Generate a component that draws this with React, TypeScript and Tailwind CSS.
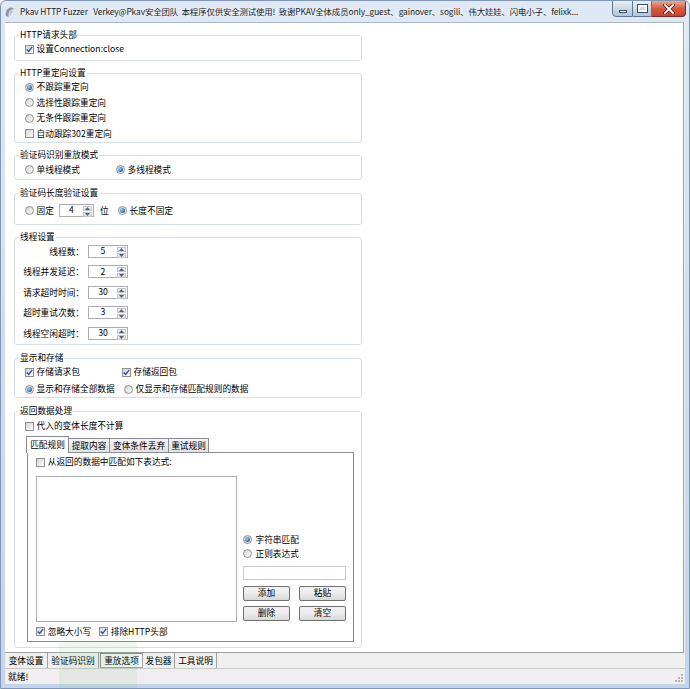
import React from 'react';

type ItemProps = { checked?: boolean; label: React.ReactNode; className?: string };

const CheckBox = ({ checked = false, label, className = '' }: ItemProps) => (
  <div className={`flex items-center gap-[3px] ${className}`}>
    <span className="w-[9px] h-[9px] shrink-0 border border-[#8e8f8f] bg-linear-to-br from-[#d4d4d4] to-[#fdfdfd] flex items-center justify-center">
      {checked && (
        <svg width="7" height="7" viewBox="0 0 7 7">
          <path d="M0.8 3.5 L2.7 5.4 L6.2 0.9" fill="none" stroke="#3a55a4" strokeWidth="1.5" />
        </svg>
      )}
    </span>
    <span className="whitespace-nowrap">{label}</span>
  </div>
);

const Radio = ({ checked = false, label, className = '' }: ItemProps) => (
  <div className={`flex items-center gap-[3px] ${className}`}>
    <span className="w-[9px] h-[9px] shrink-0 rounded-full border border-[#8e8f8f] bg-linear-to-br from-[#d2d2d2] to-[#fdfdfd] flex items-center justify-center">
      {checked && <span className="w-[5px] h-[5px] rounded-full bg-[radial-gradient(circle_at_35%_35%,#9ad6ff,#1b5bb0_75%)]" />}
    </span>
    <span className="whitespace-nowrap">{label}</span>
  </div>
);

const Spin = ({ value, className = '' }: { value: string; className?: string }) => (
  <div className={`flex h-[13px] border border-[#abadb3] bg-white ${className}`}>
    <div className="flex-1 flex items-center justify-center leading-none">{value}</div>
    <div className="w-[10px] flex flex-col gap-px py-px pr-px">
      <div className="flex-1 flex items-center justify-center bg-linear-to-b from-[#f6f6f6] to-[#dcdcdc] border border-[#c6c6c6]">
        <svg width="5" height="3" viewBox="0 0 5 3"><path d="M0 3 L2.5 0 L5 3Z" fill="#4a5f8a" /></svg>
      </div>
      <div className="flex-1 flex items-center justify-center bg-linear-to-b from-[#f6f6f6] to-[#dcdcdc] border border-[#c6c6c6]">
        <svg width="5" height="3" viewBox="0 0 5 3"><path d="M0 0 L2.5 3 L5 0Z" fill="#4a5f8a" /></svg>
      </div>
    </div>
  </div>
);

const Group = ({ title, className = '', children }: { title: string; className?: string; children?: React.ReactNode }) => (
  <div className={`relative w-[348px] shrink-0 border border-[#d5dfe5] rounded-[3px] ${className}`}>
    <span className="absolute left-[4px] -top-[7px] px-[1px] bg-white leading-[12px] whitespace-nowrap">{title}</span>
    {children}
  </div>
);

const WinButton = ({ label }: { label: string }) => (
  <button className="flex-1 h-full border border-[#707070] rounded-[2px] bg-linear-to-b from-[#f3f3f3] via-[#ebebeb] to-[#d8d8d8] flex items-center justify-center leading-none">
    {label}
  </button>
);

const threadRows = [
  { label: '线程数：', value: '5' },
  { label: '线程并发延迟：', value: '2' },
  { label: '请求超时时间：', value: '30' },
  { label: '超时重试次数：', value: '3' },
  { label: '线程空闲超时：', value: '30' },
];

export default function App() {
  return (
    <div className="relative w-[690px] h-[689px] flex flex-col overflow-hidden rounded-t-[6px] border border-[#7f96b6] bg-linear-to-b from-[#dfe9f5] via-[#cfdeef] to-[#c2d5eb] font-['Noto_Sans_CJK_SC','Noto_Sans',sans-serif] text-[8.7px] text-black">
      {/* title bar */}
      <div className="h-[21px] shrink-0 flex items-start">
        <div className="h-full flex items-center pl-[3px] min-w-0 flex-1">
          <svg width="11" height="12" viewBox="0 0 11 12" className="shrink-0">
            <path d="M2 10 C1 6 3 2 7 1.5 C9 1.3 10 2.5 9.5 3.5 C7 3 4.5 5 4.5 8 L4.5 11 Z" fill="#8a96a8" />
            <path d="M5.5 6 C6.5 4.5 8.5 4.5 9 5.5 C8 6 7 7 7 9 L5.5 10 Z" fill="#b7c2d2" />
          </svg>
          <span className="ml-[5px] whitespace-nowrap overflow-hidden text-[8.4px] tracking-[-0.1px] text-[#1b1b1b] [text-shadow:0_0_5px_#ffffff]">
            Pkav HTTP Fuzzer&nbsp;&nbsp;&nbsp;Verkey@Pkav安全团队&nbsp;&nbsp;本程序仅供安全测试使用!&nbsp;&nbsp;致谢PKAV全体成员only_guest、gainover、sogili、伟大娃娃、闪电小子、felixk...
          </span>
        </div>
        <div className="flex h-[17px] mr-[3px] ml-[4px] shrink-0 -mt-px">
          <div className="w-[21px] h-full border border-[#5f7796] rounded-bl-[4px] bg-linear-to-b from-[#e9f0f7] via-[#cbd8e6] to-[#b3c5da] flex items-center justify-center">
            <span className="mt-[5px] w-[8px] h-[3px] bg-white border border-[#38506e]" />
          </div>
          <div className="w-[19px] h-full border-y border-r border-[#5f7796] bg-linear-to-b from-[#e9f0f7] via-[#cbd8e6] to-[#b3c5da] flex items-center justify-center">
            <span className="w-[9px] h-[7px] border-[2px] border-white outline outline-1 outline-[#38506e]" />
          </div>
          <div className="w-[34px] h-full border-y border-r border-[#7a2a22] rounded-br-[4px] bg-linear-to-b from-[#eba894] via-[#d55a41] to-[#c9432c] flex items-center justify-center">
            <svg width="12" height="10" viewBox="0 0 12 10">
              <path d="M2 1 L10 9 M10 1 L2 9" stroke="#5a1d15" strokeWidth="3.4" strokeLinecap="square" />
              <path d="M2 1 L10 9 M10 1 L2 9" stroke="#ffffff" strokeWidth="1.8" strokeLinecap="square" />
            </svg>
          </div>
        </div>
      </div>

      {/* client area */}
      <div className="flex-1 flex flex-col mx-[4px] mb-[4px] bg-[#f0f0f0] min-h-0">
        {/* option page */}
        <div className="h-[631px] shrink-0 mr-[1px] bg-white border-t border-[#a9b8c9] border-b border-r border-b-[#a0a0a0] border-r-[#a0a0a0] pl-[9px] flex flex-col">
          <Group title="HTTP请求头部" className="mt-[12px] h-[26px] pt-[6px] pl-[9.5px]">
            <CheckBox checked label="设置Connection:close" className="h-[14px]" />
          </Group>

          <Group title="HTTP重定向设置" className="mt-[12px] h-[70px] pt-[5.25px] pl-[9.5px]">
            <Radio checked label="不跟踪重定向" className="h-[15.5px]" />
            <Radio label="选择性跟踪重定向" className="h-[15.5px]" />
            <Radio label="无条件跟踪重定向" className="h-[15.5px]" />
            <CheckBox label="自动跟踪302重定向" className="h-[15.5px]" />
          </Group>

          <Group title="验证码识别重放模式" className="mt-[12px] h-[25px] pt-[6.3px] pl-[9.5px]">
            <div className="flex h-[14px]">
              <Radio label="单线程模式" className="w-[91px]" />
              <Radio checked label="多线程模式" />
            </div>
          </Group>

          <Group title="验证码长度验证设置" className="mt-[13px] h-[32px] pt-[9.7px] pl-[9.5px]">
            <div className="flex items-center h-[14px]">
              <Radio label="固定" />
              <Spin value="4" className="ml-[5px] w-[35px]" />
              <span className="ml-[6px]">位</span>
              <Radio checked label="长度不固定" className="ml-[9px]" />
            </div>
          </Group>

          <Group title="线程设置" className="mt-[12px] h-[108px] pt-[3.3px]">
            {threadRows.map((r) => (
              <div key={r.label} className="flex items-center h-[20.4px]">
                <span className="w-[69px] text-right whitespace-nowrap">{r.label}</span>
                <Spin value={r.value} className="ml-[4px] w-[40px]" />
              </div>
            ))}
          </Group>

          <Group title="显示和存储" className="mt-[13px] h-[40px] pt-[4.5px] pl-[9.5px]">
            <div className="flex h-[17px]">
              <CheckBox checked label="存储请求包" className="w-[97px]" />
              <CheckBox checked label="存储返回包" />
            </div>
            <div className="flex h-[17px]">
              <Radio checked label="显示和存储全部数据" className="w-[99px]" />
              <Radio label="仅显示和存储匹配规则的数据" />
            </div>
          </Group>

          <Group title="返回数据处理" className="mt-[13px] h-[237px] pt-[7px]">
            <CheckBox label="代入的变体长度不计算" className="h-[14px] pl-[9.5px]" />
            <div className="ml-[12px] mt-[3px] w-[327px]">
              <div className="flex items-end h-[16px] -ml-px">
                <div className="relative z-10 -mb-px w-[43px] h-[17px] bg-white border-x border-t border-[#898c95] flex items-center justify-center whitespace-nowrap">匹配规则</div>
                <div className="w-[41px] h-[14px] bg-linear-to-b from-[#f4f4f4] to-[#e2e2e2] border-t border-r border-[#898c95] flex items-center justify-center whitespace-nowrap">提取内容</div>
                <div className="w-[59px] h-[14px] bg-linear-to-b from-[#f4f4f4] to-[#e2e2e2] border-t border-r border-[#898c95] flex items-center justify-center whitespace-nowrap">变体条件丢弃</div>
                <div className="w-[40px] h-[14px] bg-linear-to-b from-[#f4f4f4] to-[#e2e2e2] border-t border-r border-[#898c95] flex items-center justify-center whitespace-nowrap">重试规则</div>
              </div>
              <div className="h-[190px] border border-[#898c95] bg-white pl-[7.7px] pt-[2px]">
                <CheckBox label="从返回的数据中匹配如下表达式:" className="h-[14px]" />
                <div className="flex mt-[7px] h-[146px]">
                  <div className="w-[201px] h-full border border-[#abadb3] bg-white" />
                  <div className="ml-[6.3px] w-[103px] flex flex-col justify-end pb-[1px]">
                    <Radio checked label="字符串匹配" className="h-[14px] pl-[0.5px]" />
                    <Radio label="正则表达式" className="h-[14.3px] pl-[0.5px]" />
                    <div className="mt-[5.7px] h-[14px] border border-[#c5cad3] bg-white" />
                    <div className="mt-[6px] h-[14.5px] flex gap-[9px]">
                      <WinButton label="添加" />
                      <WinButton label="粘贴" />
                    </div>
                    <div className="mt-[5.5px] h-[14.7px] flex gap-[9px]">
                      <WinButton label="删除" />
                      <WinButton label="清空" />
                    </div>
                  </div>
                </div>
                <div className="flex mt-[2.7px] h-[14px]">
                  <CheckBox checked label="忽略大小写" className="w-[63px]" />
                  <CheckBox checked label="排除HTTP头部" />
                </div>
              </div>
            </div>
          </Group>
        </div>

        {/* page switcher */}
        <div className="h-[15px] shrink-0 flex items-stretch bg-[#f0f0f0]">
          <span className="w-[42px] flex items-center justify-center whitespace-nowrap">变体设置</span>
          <span className="w-px bg-[#a0a0a0]" />
          <span className="w-[50px] flex items-center justify-center whitespace-nowrap">验证码识别</span>
          <span className="w-px bg-[#a0a0a0]" />
          <span className="ml-[1px] w-[43px] flex items-center justify-center whitespace-nowrap border border-[#a7a7a7] border-t-[#8a8a8a] border-l-[#8a8a8a] bg-[#f7f7f7]">重放选项</span>
          <span className="w-[31px] flex items-center justify-center whitespace-nowrap">发包器</span>
          <span className="w-px bg-[#a0a0a0]" />
          <span className="w-[41px] flex items-center justify-center whitespace-nowrap">工具说明</span>
          <span className="w-px bg-[#a0a0a0]" />
        </div>

        {/* status bar */}
        <div className="h-[16px] shrink-0 flex items-center justify-between border-t border-[#c9c9c9] bg-[#f0eeee] pl-[3px]">
          <span>就绪!</span>
          <svg width="10" height="10" viewBox="0 0 10 10" className="self-end mb-[1px] mr-[1px]">
            <rect x="7" y="1" width="2" height="2" fill="#b4b4b4" />
            <rect x="4" y="4" width="2" height="2" fill="#b4b4b4" />
            <rect x="7" y="4" width="2" height="2" fill="#b4b4b4" />
            <rect x="1" y="7" width="2" height="2" fill="#b4b4b4" />
            <rect x="4" y="7" width="2" height="2" fill="#b4b4b4" />
            <rect x="7" y="7" width="2" height="2" fill="#b4b4b4" />
          </svg>
        </div>
      </div>

      {/* faint watermark block */}
      <span className="pointer-events-none absolute left-[58px] top-[640px] w-[78px] h-[49px] bg-[#3aa64a] opacity-[0.08]" />
    </div>
  );
}
